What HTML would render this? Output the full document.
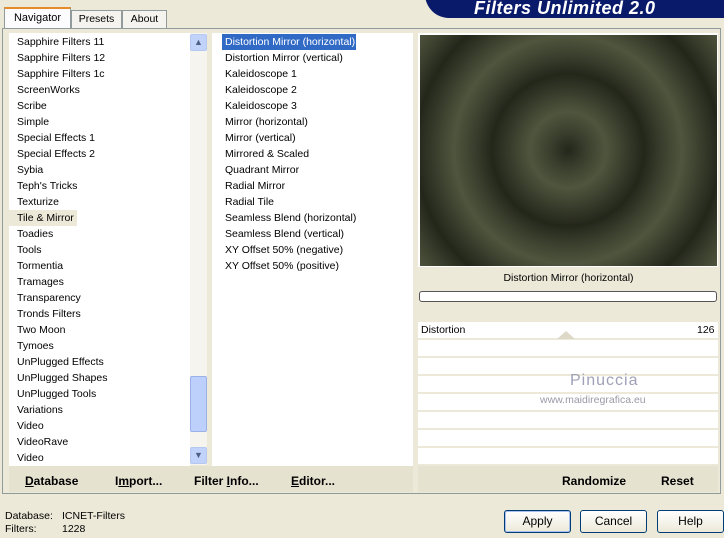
<!DOCTYPE html>
<html><head><style>
body{margin:0;width:724px;height:538px;background:#ece9d8;font-family:"Liberation Sans",sans-serif;font-size:10.5px;color:#000;position:relative;overflow:hidden}
.a{position:absolute}
.list div{height:16px;line-height:16px;padding-left:8px;white-space:nowrap}
.btn{position:absolute;border:1px solid #003c74;border-radius:3px;background:linear-gradient(#fff,#ece9d8);text-align:center;line-height:21px;font-size:12px}
.b{font-weight:bold;font-size:12px}
</style></head><body>
<div class="a" style="left:425px;top:-30px;width:330px;height:48px;background:#0a1a6a;border-radius:40px 0 0 40px"></div>
<div class="a" style="left:474px;top:-2px;font:italic bold 18px 'Liberation Sans',sans-serif;color:#fff;letter-spacing:0.5px">Filters Unlimited 2.0</div>
<!-- tabs -->
<div class="a" style="left:4px;top:7px;width:65px;height:21px;background:#fcfcfe;border:1px solid #919b9c;border-bottom:none;border-top:2px solid #e68b2c;line-height:18px;text-align:center;font-size:11px">Navigator</div>
<div class="a" style="left:71px;top:10px;width:49px;height:17px;background:#f4f3ee;border:1px solid #919b9c;line-height:17px;text-align:center">Presets</div>
<div class="a" style="left:122px;top:10px;width:43px;height:17px;background:#f4f3ee;border:1px solid #919b9c;line-height:17px;text-align:center">About</div>
<div class="a" style="left:2px;top:28px;width:717px;height:464px;border:1px solid #919b9c;background:#ece9d8"></div>
<!-- left list -->
<div class="a list" style="left:9px;top:33px;width:181px;height:432px;background:#fff;padding-top:1px">
<div>Sapphire Filters 11</div><div>Sapphire Filters 12</div><div>Sapphire Filters 1c</div><div>ScreenWorks</div><div>Scribe</div><div>Simple</div><div>Special Effects 1</div><div>Special Effects 2</div><div>Sybia</div><div>Teph's Tricks</div><div>Texturize</div><div style="background:#ece9d8;width:60px">Tile &amp; Mirror</div><div>Toadies</div><div>Tools</div><div>Tormentia</div><div>Tramages</div><div>Transparency</div><div>Tronds Filters</div><div>Two Moon</div><div>Tymoes</div><div>UnPlugged Effects</div><div>UnPlugged Shapes</div><div>UnPlugged Tools</div><div>Variations</div><div>Video</div><div>VideoRave</div><div>Video</div></div>
<div class="a" style="left:190px;top:33px;width:17px;height:432px;background:#f5f4ef"></div>
<div class="a" style="left:190px;top:34px;width:15px;height:15px;background:#c1d3fb;border:1px solid #b5c8f0;border-radius:2px;text-align:center;font-size:9px;line-height:15px;color:#4d6185">&#9650;</div>
<div class="a" style="left:190px;top:376px;width:15px;height:54px;background:#bcd0fb;border:1px solid #9ab2e8;border-radius:2px"></div>
<div class="a" style="left:190px;top:447px;width:15px;height:15px;background:#c1d3fb;border:1px solid #b5c8f0;border-radius:2px;text-align:center;font-size:9px;line-height:15px;color:#4d6185">&#9660;</div>
<!-- middle list -->
<div class="a list" style="left:212px;top:33px;width:201px;height:432px;background:#fff;padding-top:1px">
<div style="margin-left:10px;width:131px;background:#316ac5;color:#fff;padding-left:3px;outline:1px dotted #fff">Distortion Mirror (horizontal)</div><div style="padding-left:13px">Distortion Mirror (vertical)</div><div style="padding-left:13px">Kaleidoscope 1</div><div style="padding-left:13px">Kaleidoscope 2</div><div style="padding-left:13px">Kaleidoscope 3</div><div style="padding-left:13px">Mirror (horizontal)</div><div style="padding-left:13px">Mirror (vertical)</div><div style="padding-left:13px">Mirrored &amp; Scaled</div><div style="padding-left:13px">Quadrant Mirror</div><div style="padding-left:13px">Radial Mirror</div><div style="padding-left:13px">Radial Tile</div><div style="padding-left:13px">Seamless Blend (horizontal)</div><div style="padding-left:13px">Seamless Blend (vertical)</div><div style="padding-left:13px">XY Offset 50% (negative)</div><div style="padding-left:13px">XY Offset 50% (positive)</div></div>
<!-- preview -->
<div class="a" style="left:418px;top:33px;width:300px;height:234px;background:#fff"></div>
<div class="a" style="left:420px;top:35px;width:297px;height:231px;background:repeating-radial-gradient(circle at 148px 115px,#23261a 0px,#383c2b 16px,#50553e 38px,#383c2b 58px,#23261a 76px)"></div>
<div class="a" style="left:420px;top:268px;width:297px;height:20px;text-align:center;line-height:20px">Distortion Mirror (horizontal)</div>
<div class="a" style="left:419px;top:291px;width:296px;height:9px;border:1px solid #555;border-radius:3px;background:#fff"></div>
<div class="a" style="left:418px;top:322px;width:300px;height:143px;background:repeating-linear-gradient(#fff 0 16px,#ece9d8 16px 18px)"></div>
<div class="a" style="left:421px;top:324px">Distortion</div>
<div class="a" style="left:697px;top:324px">126</div>
<div class="a" style="left:557px;top:331px;width:0;height:0;border-left:9px solid transparent;border-right:9px solid transparent;border-bottom:8px solid #ddd8c8"></div>
<div class="a" style="left:570px;top:372px;font-size:16px;color:#a0a0b8;letter-spacing:1px">Pinuccia</div>
<div class="a" style="left:540px;top:394px;font-size:10.5px;color:#9a9aa8">www.maidiregrafica.eu</div>
<!-- bottom bars -->
<div class="a" style="left:9px;top:466px;width:404px;height:26px;background:#e6e2d0"></div>
<div class="a" style="left:418px;top:466px;width:300px;height:26px;background:#e6e2d0"></div>
<div class="a b" style="left:25px;top:474px"><u>D</u>atabase</div>
<div class="a b" style="left:115px;top:474px">I<u>m</u>port...</div>
<div class="a b" style="left:194px;top:474px">Filter <u>I</u>nfo...</div>
<div class="a b" style="left:291px;top:474px"><u>E</u>ditor...</div>
<div class="a b" style="left:562px;top:474px">Randomize</div>
<div class="a b" style="left:661px;top:474px">Reset</div>
<div class="a" style="left:5px;top:510px;line-height:13px">Database:<br>Filters:</div>
<div class="a" style="left:62px;top:510px;line-height:13px">ICNET-Filters<br>1228</div>
<div class="btn" style="left:504px;top:510px;width:65px;height:21px;box-shadow:inset 0 0 0 1px #a8c0ef">Apply</div>
<div class="btn" style="left:580px;top:510px;width:65px;height:21px">Cancel</div>
<div class="btn" style="left:657px;top:510px;width:65px;height:21px">Help</div>
</body></html>
